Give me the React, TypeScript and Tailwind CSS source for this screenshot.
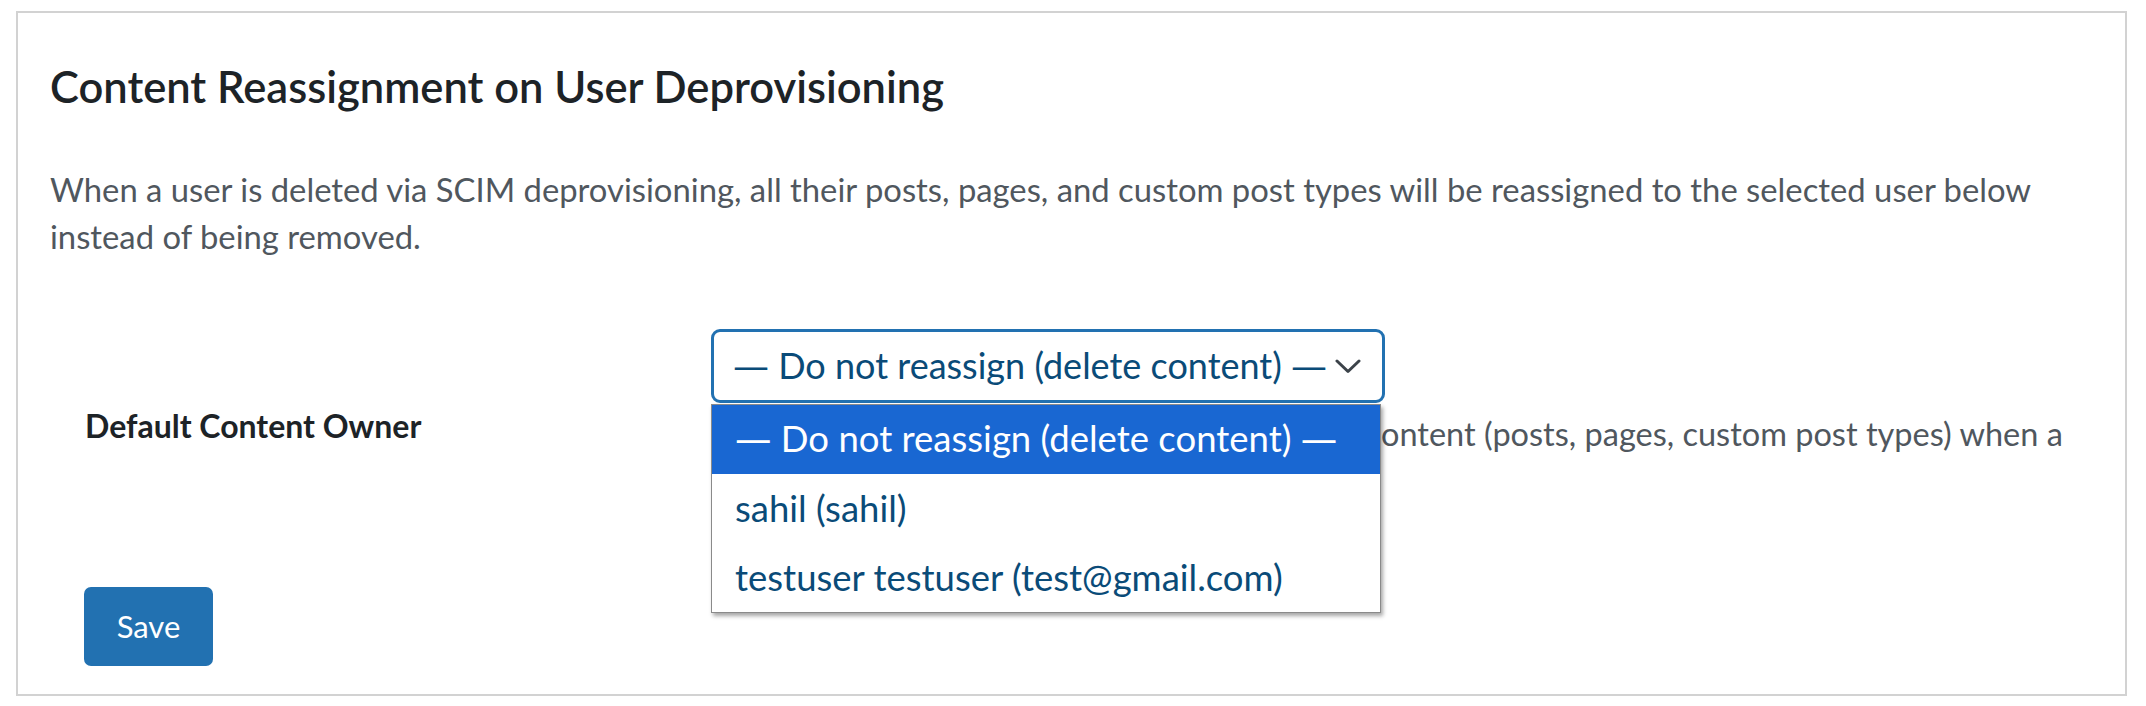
import * as React from "react";

const options = [
  { dash: true, label: "Do not reassign (delete content)" },
  { dash: false, label: "sahil (sahil)" },
  { dash: false, label: "testuser testuser (test@gmail.com)" },
];

function Dash() {
  return <span className="font-['DejaVu_Sans',sans-serif]">—</span>;
}

function OptionText({ dash, label }: { dash: boolean; label: string }) {
  if (!dash) return <span>{label}</span>;
  return (
    <span>
      <Dash /> {label} <Dash />
    </span>
  );
}

function Chevron() {
  return (
    <svg width="26" height="15" viewBox="0 0 26 15" fill="none">
      <polyline points="2,2 13,12.5 24,2" stroke="#3c434a" strokeWidth="3" strokeLinecap="round" strokeLinejoin="round" />
    </svg>
  );
}

export default function App() {
  const [selected] = React.useState(0);

  return (
    <div className="w-[2146px] h-[706px] bg-white pt-[11px] pl-[16px] font-['Lato',sans-serif]">
      <div className="w-[2111px] h-[685px] border-2 border-[#d2d2d2] bg-white pt-[46px] pl-[32px] pr-[31px]">
        <h2 className="text-[43.5px] leading-[54px] font-semibold text-[#1d2327]">
          Content Reassignment on User Deprovisioning
        </h2>
        <p className="mt-[53px] text-[32.8px] leading-[47px] text-[#50575e]">
          When a user is deleted via SCIM deprovisioning, all their posts, pages, and custom post types will be reassigned to the selected user below instead of being removed.
        </p>

        <div className="mt-[69px] flex pl-[35px]">
          <div className="w-[626px] shrink-0 pt-[77px]">
            <label className="block text-[32px] leading-[40px] font-bold text-[#1d2327]">
              Default Content Owner
            </label>
          </div>
          <div className="relative flex-1">
            <div className="flex h-[74px] w-[674px] items-center justify-between rounded-[9px] border-[3px] border-[#2271b1] bg-white pl-[19px] pr-[21px] text-[36px] leading-[43px] text-[#0a4b78]">
              <OptionText {...options[selected]} />
              <Chevron />
            </div>
            <p className="mt-[7px] text-[32.5px] leading-[47px] text-[#50575e]">
              Select the admin user who will be assigned all content (posts, pages, custom post types) when a user is deprovisioned.
            </p>

            <ul className="absolute left-0 top-[75px] w-[670px] border border-[#8a8a8a] bg-white shadow-[2px_3px_4px_rgba(0,0,0,0.35)]">
              {options.map((o, i) => (
                <li
                  key={o.label}
                  className={
                    i === selected
                      ? "flex h-[69px] items-center bg-[#1967d2] pl-[23px] text-[36.5px] text-white"
                      : "flex h-[69px] items-center pl-[23px] text-[36.5px] text-[#0a4b78]"
                  }
                >
                  <OptionText {...o} />
                </li>
              ))}
            </ul>
          </div>
        </div>

        <button className="ml-[34px] mt-[83px] h-[79px] w-[129px] rounded-[7px] bg-[#2271b1] text-[31px] text-white">
          Save
        </button>
      </div>
    </div>
  );
}
